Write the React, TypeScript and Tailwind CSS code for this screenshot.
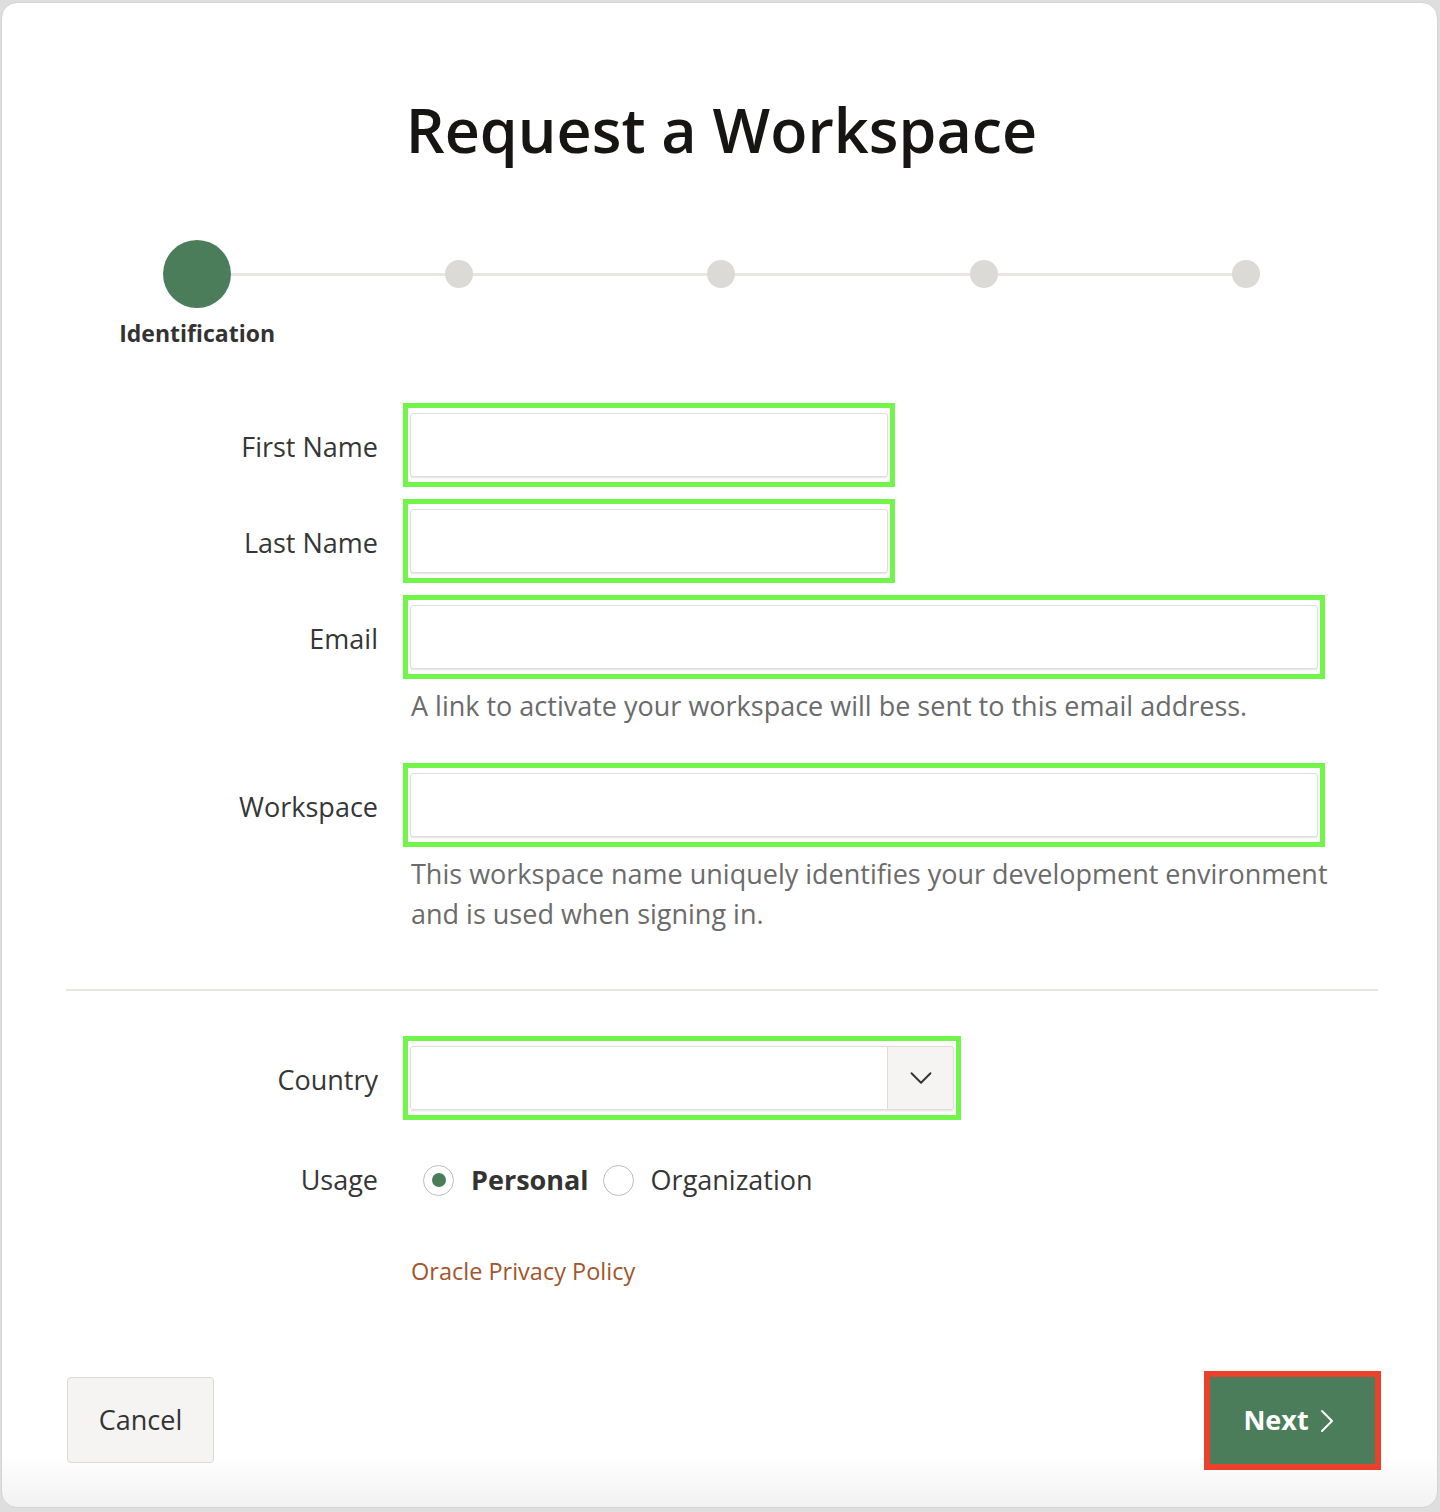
import { ChevronDown } from 'lucide-react';

const font = { fontFamily: '"Open Sans", "Noto Sans", sans-serif' };

const steps = ['Identification', '', '', '', ''];

const Field = ({ width, children }: { width: string; children?: React.ReactNode }) => (
  <div className="w-fit border-[5px] border-[#72f54a] px-[2px] py-[5px]">
    {children ?? (
      <input
        className={`${width} block h-[64px] rounded-[3px] border border-[#dfddd8] bg-white shadow-[0_1px_2px_rgba(0,0,0,0.12)] outline-none`}
      />
    )}
  </div>
);

const Row = ({ label, children }: { label: string; children: React.ReactNode }) => (
  <div className="flex gap-[25px]">
    <div className="flex h-[84px] w-[312px] shrink-0 items-center justify-end pt-[4px] text-[27px] text-[#363636]">
      {label}
    </div>
    <div>{children}</div>
  </div>
);

const Radio = ({ label, checked }: { label: string; checked?: boolean }) => (
  <label className="flex items-center">
    <span className="flex h-[31px] w-[31px] items-center justify-center rounded-full border-[1.5px] border-[#bdbdbd] bg-white">
      {checked && <span className="h-[14px] w-[14px] rounded-full bg-[#4b7d5a]" />}
    </span>
    <span className={`ml-[17px] text-[27px] ${checked ? 'font-bold text-[#333]' : 'text-[#363636]'}`}>{label}</span>
  </label>
);

const App = () => {
  return (
    <div className="h-[1512px] w-[1440px] bg-[#dedede] pl-[1px] pt-[2px]" style={font}>
      <div className="flex h-[1506px] w-[1437px] flex-col rounded-[16px] border border-[#d4d4d4] bg-[linear-gradient(to_bottom,#ffffff_96.5%,#f2f2f2)] pl-[64px] pr-[60px]">
        <h1 className="pt-[91px] text-center text-[61px] font-semibold leading-[72px] text-[#161513]">
          Request a Workspace
        </h1>

        {/* stepper */}
        <div className="relative mt-[74px] grid grid-cols-5">
          <div className="absolute left-[131px] right-[131px] top-[33px] h-[3px] bg-[#e8e6e2]" />
          {steps.map((s, i) => (
            <div key={i} className="relative flex flex-col items-center">
              <div className="flex h-[68px] items-center">
                {i === 0 ? (
                  <div className="h-[68px] w-[68px] rounded-full bg-[#4b7d5a]" />
                ) : (
                  <div className="h-[28px] w-[28px] rounded-full bg-[#dcdad6]" />
                )}
              </div>
              <div className="mt-[10px] h-[30px] text-[23px] font-bold leading-[30px] text-[#333]">{s}</div>
            </div>
          ))}
        </div>

        {/* form */}
        <div className="mt-[55px] flex flex-col">
          <Row label="First Name">
            <Field width="w-[478px]" />
          </Row>
          <div className="mt-[12px]">
            <Row label="Last Name">
              <Field width="w-[478px]" />
            </Row>
          </div>
          <div className="mt-[12px]">
            <Row label="Email">
              <Field width="w-[908px]" />
              <p className="mt-[7px] pl-[8px] text-[27px] leading-[40px] text-[#6b6b6b]">
                A link to activate your workspace will be sent to this email address.
              </p>
            </Row>
          </div>
          <div className="mt-[37px]">
            <Row label="Workspace">
              <Field width="w-[908px]" />
              <p className="mt-[7px] w-[935px] pl-[8px] text-[27px] leading-[40px] text-[#6b6b6b]">
                This workspace name uniquely identifies your development environment and is used when signing in.
              </p>
            </Row>
          </div>

          <div className="mt-[55px] h-[2px] w-[1312px] bg-[#e8e6e2]" />

          <div className="mt-[45px]">
            <Row label="Country">
              <Field width="">
                <div className="flex h-[64px] shadow-[0_1px_2px_rgba(0,0,0,0.12)]">
                  <div className="w-[478px] rounded-l-[3px] border border-[#dfddd8] bg-white" />
                  <div className="flex w-[66px] items-center justify-center rounded-r-[3px] border border-l-0 border-[#dfddd8] bg-[#f5f4f2]">
                    <ChevronDown className="h-[38px] w-[38px] text-[#333]" strokeWidth={1.2} />
                  </div>
                </div>
              </Field>
            </Row>
          </div>

          <div className="mt-[40px] flex gap-[25px]">
            <div className="w-[312px] pb-[8px] text-right text-[27px] leading-[40px] text-[#363636]">Usage</div>
            <div className="flex h-[40px] items-center gap-[14px] pl-[20px]">
              <Radio label="Personal" checked />
              <Radio label="Organization" />
            </div>
          </div>

          <div className="mt-[46px] pl-[345px]">
            <a className="text-[23.5px] leading-[34px] text-[#a3552d]">Oracle Privacy Policy</a>
          </div>
        </div>

        {/* actions */}
        <div className="mt-[89px] flex items-start justify-between pr-[2px]">
          <button className="ml-[1px] h-[86px] w-[147px] rounded-[4px] border border-[#dcdad6] bg-[#f5f4f2] text-[27px] text-[#333]">
            Cancel
          </button>
          <button className="flex h-[87px] w-[165px] items-center justify-center gap-[11px] bg-[#4b7d5a] pr-[8px] text-[27px] font-bold text-white outline-[6px] outline-[#e9412b]">
            Next
            <svg width="14" height="24" viewBox="0 0 14 24" fill="none" stroke="currentColor" strokeWidth="2" strokeLinecap="round" strokeLinejoin="round">
              <polyline points="2,2 12,12 2,22" />
            </svg>
          </button>
        </div>
      </div>
    </div>
  );
};

export default App;
